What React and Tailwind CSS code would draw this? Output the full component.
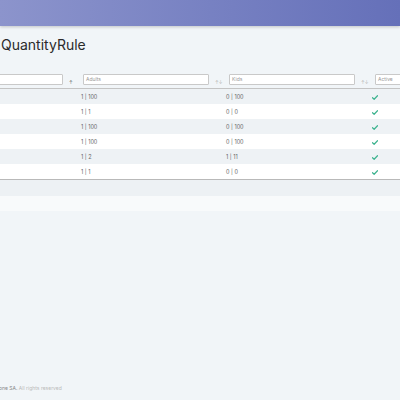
import React from "react";

const rows = [
  ["1 | 100", "0 | 100"],
  ["1 | 1", "0 | 0"],
  ["1 | 100", "0 | 100"],
  ["1 | 100", "0 | 100"],
  ["1 | 2", "1 | 11"],
  ["1 | 1", "0 | 0"],
];

function Check() {
  return (
    <svg width="6" height="5" viewBox="0 0 12 10" className="block">
      <path d="M1 5.5 L4.3 8.5 L11 1.5" fill="none" stroke="#3db38f" strokeWidth="2.4" strokeLinecap="round" strokeLinejoin="round" />
    </svg>
  );
}

function Sort({ dark }) {
  return (
    <span className={`w-[9px] text-[4.5px] leading-none ${dark ? "text-[#666]" : "text-[#b5b5b5]"}`}>{dark ? "↑" : "↑↓"}</span>
  );
}

function FilterCell({ placeholder, dark }) {
  return (
    <div className="w-[146px] shrink-0 flex items-end pl-[3px] gap-[6px]">
      <div className="w-[126px] h-[11px] bg-white border border-[#c9c9c9] rounded-[1px] flex items-center pl-[2px] text-[5px] text-[#999] shrink-0">
        {placeholder}
      </div>
      <Sort dark={dark} />
    </div>
  );
}

export default function App() {
  return (
    <div className="w-[400px] h-[400px] bg-[#f1f5f8] overflow-hidden flex flex-col" style={{ fontFamily: "Inter, 'Open Sans', sans-serif" }}>
      <div className="h-[26px] shrink-0 bg-gradient-to-r from-[#8c94cc] to-[#6570b9] shadow-[0_1px_3px_rgba(0,0,0,0.2)]" />
      <div className="pt-[10px] pl-[1px] h-[44px] shrink-0 text-[14px] text-[#2b2b2b] leading-[18px]">QuantityRule</div>
      <div className="ml-[-66px] flex flex-col shrink-0">
        <div className="flex h-[18px] pb-[3px] items-end">
          <FilterCell placeholder="Name" dark />
          <FilterCell placeholder="Adults" />
          <FilterCell placeholder="Kids" />
          <FilterCell placeholder="Active" />
        </div>
        <div className="h-[1px] bg-[#c4c4c4]" />
        {rows.map((r, i) => (
          <div key={i} className={`flex h-[15px] pt-[1px] items-center text-[5.5px] text-[#666] ${i % 2 === 0 ? "bg-[#eef2f5]" : "bg-white"}`}>
            <div className="w-[146px] shrink-0" />
            <div className="w-[146px] shrink-0 pl-[1px]">{r[0]}</div>
            <div className="w-[146px] shrink-0">{r[1]}</div>
            <div className="w-[146px] shrink-0"><Check /></div>
          </div>
        ))}
        <div className="h-[1px] bg-[#b9b9b9]" />
        <div className="h-[16px] bg-[#edf1f4]" />
        <div className="h-[15px] bg-[#f8fafb]" />
      </div>
      <div className="flex-1" />
      <div className="h-[15px] shrink-0 text-[5px] leading-[6px] text-[#888] ml-[-1px]">
        <span>one SA.</span> <span className="text-[#bbb]">All rights reserved</span>
      </div>
    </div>
  );
}
